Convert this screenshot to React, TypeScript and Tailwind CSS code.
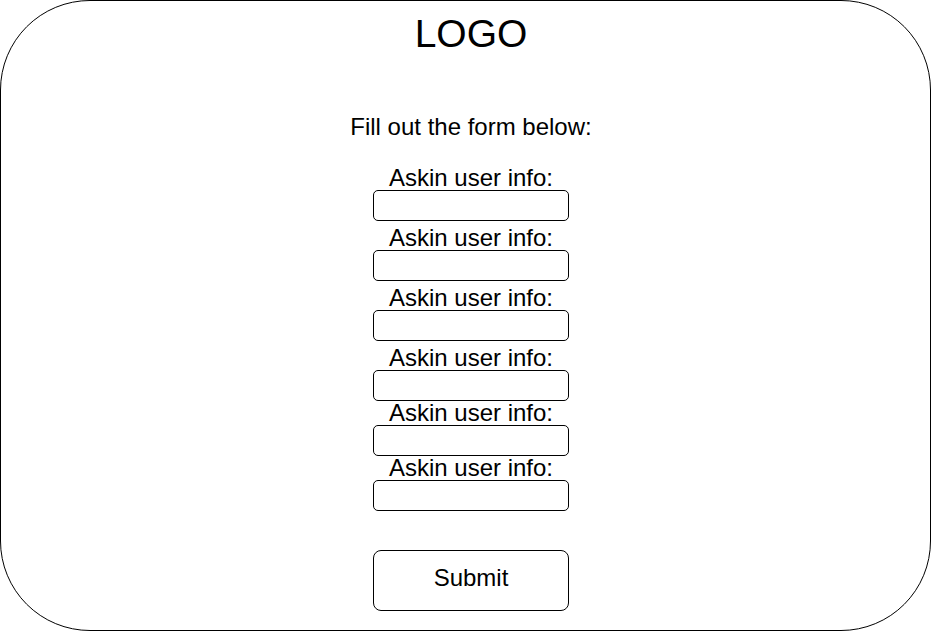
import React from "react";

const groupMargins = ["mt-[27px]", "mt-[5px]", "mt-[5px]", "mt-[5px]", "mt-0", "mt-0"];

const App = () => {
  return (
    <div className="w-[931px] h-[631px] bg-white font-['Liberation_Sans',Arial,sans-serif] text-black">
      <div className="box-border w-full h-full border border-black rounded-[90px] flex flex-col items-center pt-[13px] pl-[11px]">
        <div className="text-[39px] leading-[40px] h-[40px]">LOGO</div>
        <div className="mt-[61px] text-[24px] leading-[24px] h-[24px]">Fill out the form below:</div>
        {groupMargins.map((m, i) => (
          <div key={i} className={`${m} flex flex-col items-center`}>
            <label className="text-[24px] leading-[24px] h-[24px]">Askin user info:</label>
            <input
              type="text"
              className="box-border w-[196px] h-[31px] border border-black rounded-[5px] bg-white outline-none"
            />
          </div>
        ))}
        <button
          type="button"
          className="mt-[39px] box-border w-[196px] h-[61px] border border-black rounded-[8px] bg-white text-[24px] leading-[24px] pb-[6px]"
        >
          Submit
        </button>
      </div>
    </div>
  );
};

export default App;
